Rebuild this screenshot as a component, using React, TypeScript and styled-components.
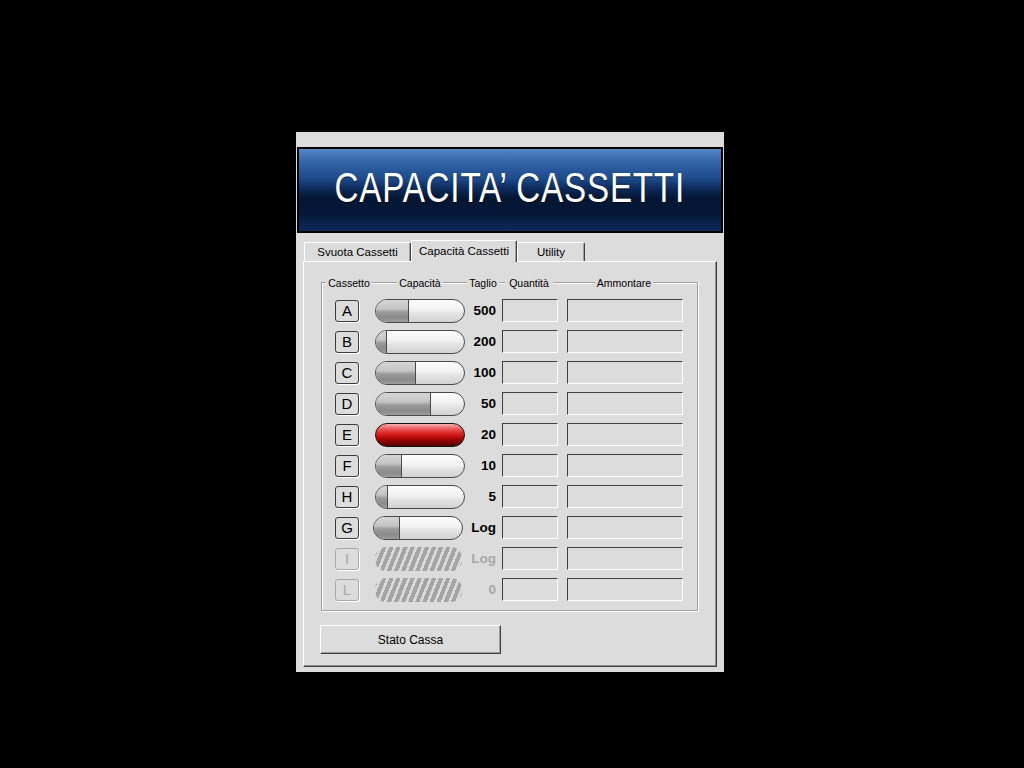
import React from "react";
import styled, { createGlobalStyle, css } from "styled-components";

const GlobalStyle = createGlobalStyle`
  html, body {
    margin: 0;
    padding: 0;
    background: #000;
  }
  body {
    font-family: "Liberation Sans", Arial, sans-serif;
    width: 1024px;
    height: 768px;
    overflow: hidden;
  }
`;

type Drawer = {
  letter: string;
  fill: number;
  taglio: string;
  state?: "normal" | "full" | "disabled";
  shift?: boolean;
};

const drawers: Drawer[] = [
  { letter: "A", fill: 0.38, taglio: "500" },
  { letter: "B", fill: 0.13, taglio: "200" },
  { letter: "C", fill: 0.46, taglio: "100" },
  { letter: "D", fill: 0.62, taglio: "50" },
  { letter: "E", fill: 1, taglio: "20", state: "full" },
  { letter: "F", fill: 0.3, taglio: "10" },
  { letter: "H", fill: 0.14, taglio: "5" },
  { letter: "G", fill: 0.3, taglio: "Log", shift: true },
  { letter: "I", fill: 0, taglio: "Log", state: "disabled" },
  { letter: "L", fill: 0, taglio: "0", state: "disabled" },
];

const Page = styled.div`
  padding: 132px 0 0 296px;
`;

const Window = styled.div`
  width: 428px;
  height: 540px;
  box-sizing: border-box;
  background: #dcdcdc;
  padding: 15px 7px 5px 7px;
  display: flex;
  flex-direction: column;
`;

const Banner = styled.div`
  margin: 0 -6px;
  height: 86px;
  box-sizing: border-box;
  border: 2px solid #000;
  background: linear-gradient(
    180deg,
    #5585c6 0%,
    #3264a8 16%,
    #1d4a8b 36%,
    #0d2b5c 48%,
    #041632 60%,
    #05183a 80%,
    #0c2a5c 100%
  );
  display: flex;
  align-items: center;
  justify-content: center;
  padding-bottom: 4px;
`;

const BannerTitle = styled.span`
  display: inline-block;
  color: #fff;
  font-family: "Liberation Sans", Arial, sans-serif;
  font-size: 42px;
  letter-spacing: 1px;
  white-space: nowrap;
  transform: scaleX(0.79);
  text-shadow: 0 1px 1px rgba(0, 0, 0, 0.6);
`;

const TabStrip = styled.div`
  margin-top: 7px;
  height: 21px;
  display: flex;
  align-items: flex-end;
  padding-left: 1px;
  position: relative;
  z-index: 1;
`;

const Tab = styled.div<{ $w: number; $active?: boolean }>`
  width: ${(p) => p.$w}px;
  height: 19px;
  box-sizing: border-box;
  border-top: 1px solid #fff;
  border-left: 1px solid #fff;
  border-right: 1px solid #404040;
  box-shadow: inset -1px 0 0 #a0a0a0;
  border-radius: 2px 2px 0 0;
  background: #dcdcdc;
  font-size: 11.5px;
  color: #000;
  display: flex;
  align-items: center;
  justify-content: center;
  white-space: nowrap;
  ${(p) =>
    p.$active &&
    css`
      height: 22px;
      margin-bottom: -1px;
      padding-bottom: 2px;
    `}
`;

const Panel = styled.div`
  flex: 1;
  box-sizing: border-box;
  border-top: 1px solid #fff;
  border-left: 1px solid #fff;
  border-right: 1px solid #404040;
  border-bottom: 1px solid #404040;
  box-shadow: inset -1px -1px 0 #909090;
  padding: 14px 18px 0 17px;
  display: flex;
  flex-direction: column;
`;

const GroupHeader = styled.div`
  height: 14px;
  display: flex;
  align-items: center;
`;

const HeadLabel = styled.span<{ $w: number }>`
  width: ${(p) => p.$w}px;
  flex: none;
  font-size: 10.5px;
  text-align: center;
  white-space: nowrap;
  color: #000;
`;

const HeadLine = styled.span<{ $w?: number }>`
  ${(p) => (p.$w ? `width: ${p.$w}px; flex: none;` : "flex: 1;")}
  height: 0;
  border-top: 1px solid #a0a0a0;
  border-bottom: 1px solid #fff;
`;

const HeadCorner = styled.span<{ $side: "left" | "right" }>`
  align-self: flex-end;
  height: 8px;
  box-sizing: border-box;
  border-top: 1px solid #a0a0a0;
  ${(p) =>
    p.$side === "left"
      ? css`
          width: 5px;
          flex: none;
          border-left: 1px solid #a0a0a0;
          box-shadow: inset 1px 1px 0 #fff;
        `
      : css`
          flex: 1;
          border-right: 1px solid #a0a0a0;
          box-shadow: inset 0 1px 0 #fff, 1px 0 0 #fff;
        `}
`;

const GroupBody = styled.div`
  border: 1px solid #a0a0a0;
  border-top: none;
  box-shadow: inset 1px 0 0 #fff, 1px 1px 0 #fff;
  padding: 5px 0 5px 13px;
`;

const Row = styled.div`
  height: 31px;
  display: flex;
  align-items: center;
`;

const LetterBox = styled.div<{ $disabled?: boolean }>`
  width: 24px;
  height: 22px;
  box-sizing: border-box;
  border: 1px solid ${(p) => (p.$disabled ? "#a8a8a8" : "#3c3c3c")};
  border-radius: 3px;
  box-shadow: 1px 1px 0 #fff;
  display: flex;
  align-items: center;
  justify-content: center;
  font-size: 15px;
  color: ${(p) => (p.$disabled ? "#a8a8a8" : "#000")};
  margin-right: 16px;
  flex: none;
`;

const Pill = styled.div<{ $state: "normal" | "full" | "disabled"; $shift?: boolean }>`
  width: 90px;
  height: 24px;
  box-sizing: border-box;
  border-radius: 12px;
  overflow: hidden;
  display: flex;
  flex: none;
  margin-left: ${(p) => (p.$shift ? "-2px" : "0")};
  margin-right: ${(p) => (p.$shift ? "2px" : "0")};
  ${(p) =>
    p.$state === "normal" &&
    css`
      border: 1.5px solid #4a4a4a;
      background: linear-gradient(180deg, #fdfdfd 0%, #f1f1f1 45%, #e4e4e4 60%, #d2d2d2 100%);
    `}
  ${(p) =>
    p.$state === "full" &&
    css`
      border: 1.5px solid #151515;
      background: linear-gradient(
        180deg,
        #f6b0b0 0%,
        #ea5a5a 22%,
        #d82020 45%,
        #b80a0a 62%,
        #7a0000 85%,
        #4a0000 100%
      );
    `}
  ${(p) =>
    p.$state === "disabled" &&
    css`
      width: 87px;
      margin-right: 3px;
      border-radius: 11px;
      background: repeating-linear-gradient(
        112deg,
        #a4a4a4 0px,
        #a4a4a4 4px,
        #dadada 4px,
        #dadada 6.6px
      );
    `}
`;

const PillFill = styled.div`
  height: 100%;
  box-sizing: border-box;
  border-right: 1.5px solid #4a4a4a;
  background: linear-gradient(180deg, #d6d6d6 0%, #c4c4c4 40%, #9a9a9a 55%, #8a8a8a 80%, #9c9c9c 100%);
`;

const Taglio = styled.div<{ $disabled?: boolean }>`
  width: 31px;
  flex: none;
  text-align: right;
  font-size: 13.5px;
  font-weight: bold;
  color: ${(p) => (p.$disabled ? "#a8a8a8" : "#000")};
`;

const Field = styled.div<{ $w: number; $ml: number }>`
  width: ${(p) => p.$w}px;
  height: 23px;
  margin-left: ${(p) => p.$ml}px;
  box-sizing: border-box;
  flex: none;
  border-top: 1px solid #404040;
  border-left: 1px solid #404040;
  border-right: 1px solid #fff;
  border-bottom: 1px solid #fff;
  background: #dcdcdc;
`;

const Button = styled.button`
  margin: 14px 0 0 -1px;
  width: 181px;
  height: 29px;
  box-sizing: border-box;
  background: #dcdcdc;
  border: none;
  border-top: 1px solid #fff;
  border-left: 1px solid #fff;
  border-right: 1px solid #404040;
  border-bottom: 1px solid #404040;
  box-shadow: inset -1px -1px 0 #a0a0a0;
  font-family: "Liberation Sans", Arial, sans-serif;
  font-size: 12px;
  color: #000;
  padding: 0;
`;

const App: React.FC = () => {
  return (
    <Page>
      <GlobalStyle />
      <Window>
        <Banner>
          <BannerTitle>CAPACITA’ CASSETTI</BannerTitle>
        </Banner>
        <TabStrip>
          <Tab $w={107}>Svuota Cassetti</Tab>
          <Tab $w={106} $active>
            Capacità Cassetti
          </Tab>
          <Tab $w={68}>Utility</Tab>
        </TabStrip>
        <Panel>
          <div>
            <GroupHeader>
              <HeadCorner $side="left" />
              <HeadLabel $w={46}>Cassetto</HeadLabel>
              <HeadLine $w={25} />
              <HeadLabel $w={46}>Capacità</HeadLabel>
              <HeadLine $w={24} />
              <HeadLabel $w={32}>Taglio</HeadLabel>
              <HeadLine $w={6} />
              <HeadLabel $w={48}>Quantità</HeadLabel>
              <HeadLine $w={42} />
              <HeadLabel $w={58}>Ammontare</HeadLabel>
              <HeadCorner $side="right" />
            </GroupHeader>
            <GroupBody>
              {drawers.map((d) => {
                const state = d.state ?? "normal";
                const off = state === "disabled";
                return (
                  <Row key={d.letter}>
                    <LetterBox $disabled={off}>{d.letter}</LetterBox>
                    <Pill $state={state} $shift={d.shift}>
                      {state === "normal" && (
                        <PillFill style={{ width: `${d.fill * 100}%` }} />
                      )}
                    </Pill>
                    <Taglio $disabled={off}>{d.taglio}</Taglio>
                    <Field $w={56} $ml={6} />
                    <Field $w={116} $ml={9} />
                  </Row>
                );
              })}
            </GroupBody>
          </div>
          <Button>Stato Cassa</Button>
        </Panel>
      </Window>
    </Page>
  );
};

export default App;
